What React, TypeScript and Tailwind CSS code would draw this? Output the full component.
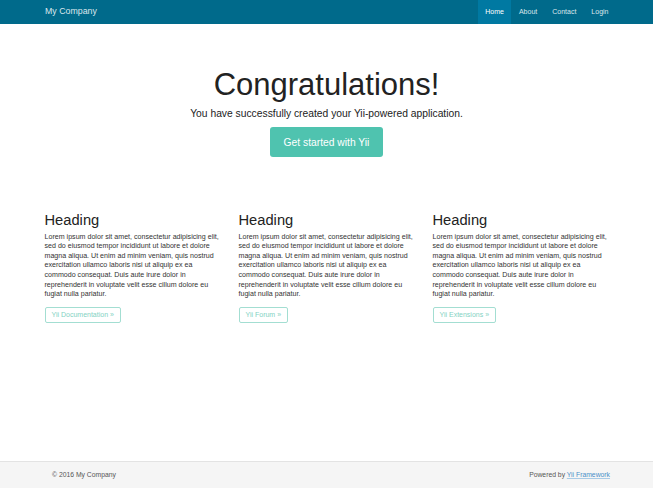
const navItems = [
  { label: "Home", active: true },
  { label: "About", active: false },
  { label: "Contact", active: false },
  { label: "Login", active: false },
];

const columns = [
  { title: "Heading", link: "Yii Documentation »" },
  { title: "Heading", link: "Yii Forum »" },
  { title: "Heading", link: "Yii Extensions »" },
];

const lorem =
  "Lorem ipsum dolor sit amet, consectetur adipisicing elit, sed do eiusmod tempor incididunt ut labore et dolore magna aliqua. Ut enim ad minim veniam, quis nostrud exercitation ullamco laboris nisi ut aliquip ex ea commodo consequat. Duis aute irure dolor in reprehenderit in voluptate velit esse cillum dolore eu fugiat nulla pariatur.";

export default function App() {
  return (
    <div className="min-h-[488px] flex flex-col bg-white text-[#333] font-['Liberation_Sans',Arial,sans-serif]">
      {/* navbar */}
      <nav className="h-[24px] bg-[#006a8b] flex items-stretch justify-between pl-[45px] pr-[37px]">
        <a className="flex items-center text-[8.8px] text-[#dbe6eb]">My Company</a>
        <ul className="flex items-stretch">
          {navItems.map((item) => (
            <li
              key={item.label}
              className={`flex items-center px-[7.5px] text-[7px] ${
                item.active ? "bg-[#0079a2] text-white" : "text-[#dbe6eb]"
              }`}
            >
              {item.label}
            </li>
          ))}
        </ul>
      </nav>

      <main className="flex-1">
        {/* jumbotron */}
        <div className="flex flex-col items-center text-center pt-[44px]">
          <h1 className="text-[31px] leading-[34px] text-[#222]">Congratulations!</h1>
          <p className="mt-[5px] text-[10.3px] leading-[14.4px] text-[#222]">
            You have successfully created your Yii-powered application.
          </p>
          <a className="mt-[6px] w-[113px] h-[30px] flex items-center justify-center rounded-[3px] bg-[#4fc3af] text-white text-[10.3px]">
            Get started with Yii
          </a>
        </div>

        {/* columns */}
        <div className="grid grid-cols-3 w-[582px] ml-[37px] mt-[55px]">
          {columns.map((col) => (
            <div key={col.link} className="px-[7.5px]">
              <h2 className="text-[14.7px] leading-[16.2px] text-[#222]">{col.title}</h2>
              <p className="mt-[4px] text-[7.1px] leading-[9.6px] text-[#333]">{lorem}</p>
              <a className="mt-[3px] inline-flex items-center h-[16px] px-[6px] border border-[#a3ded2] rounded-[2px] text-[7px] text-[#84d2c3]">
                {col.link}
              </a>
            </div>
          ))}
        </div>
      </main>

      {/* footer */}
      <footer className="h-[27px] border-t border-[#e3e3e3] bg-[#f5f5f5] flex items-center justify-between pl-[52px] pr-[43px] text-[6.8px] text-[#555]">
        <span>© 2016 My Company</span>
        <span>
          Powered by{" "}
          <a className="text-[#4a90c8] underline decoration-[#a9cbe6]">Yii Framework</a>
        </span>
      </footer>
    </div>
  );
}
